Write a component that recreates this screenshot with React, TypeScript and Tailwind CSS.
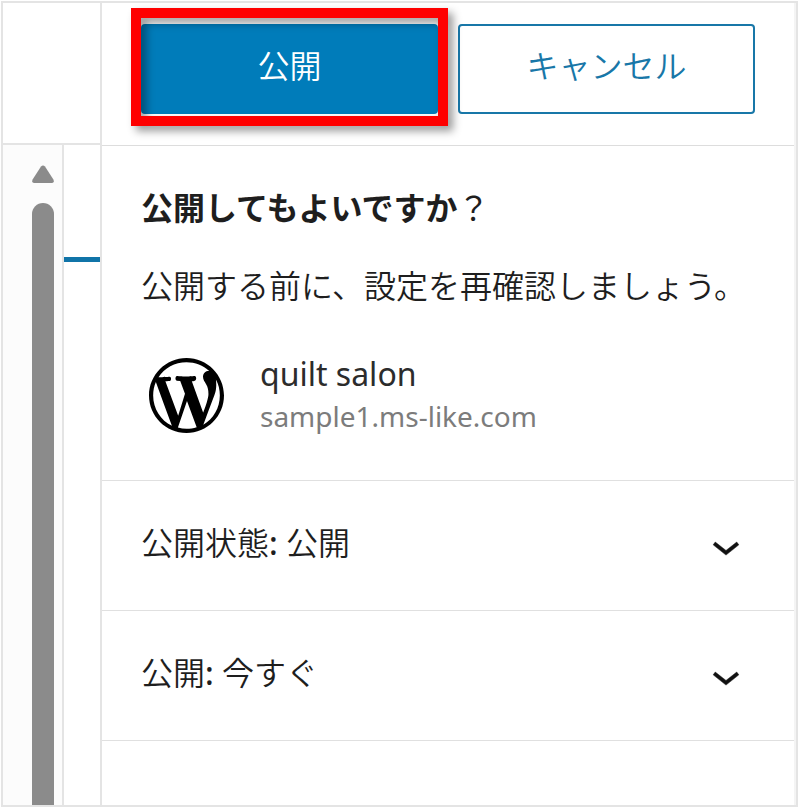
const panels = [
  { label: "公開状態", value: "公開" },
  { label: "公開", value: "今すぐ" },
]

function WordPressLogo() {
  return (
    <svg viewBox="0 0 20 20" className="h-[75px] w-[75px] shrink-0 fill-black" aria-hidden="true">
      <path d="M20 10c0-5.51-4.49-10-10-10C4.48 0 0 4.49 0 10c0 5.52 4.48 10 10 10 5.51 0 10-4.48 10-10zM7.78 15.37L4.37 6.22c.55-.02 1.17-.08 1.17-.08.5-.06.44-1.13-.06-1.11 0 0-1.45.11-2.37.11-.18 0-.37 0-.58-.01C4.12 2.69 6.87 1.11 10 1.11c2.33 0 4.45.87 6.05 2.34-.68-.11-1.65.39-1.65 1.58 0 .74.45 1.36.9 2.1.35.61.55 1.36.55 2.46 0 1.49-1.4 5-1.4 5l-3.03-8.37c.54-.02.82-.17.82-.17.5-.05.44-1.25-.06-1.22 0 0-1.44.12-2.38.12-.87 0-2.33-.12-2.33-.12-.5-.03-.56 1.2-.06 1.22l.92.08 1.26 3.41zM17.41 10c.24-.64.74-1.87.43-4.25.7 1.29 1.05 2.71 1.05 4.25 0 3.29-1.73 6.24-4.4 7.78.97-2.59 1.94-5.2 2.92-7.78zM6.1 18.09C3.12 16.65 1.11 13.53 1.11 10c0-1.3.23-2.48.72-3.59C3.25 10.3 4.67 14.2 6.1 18.09zm4.03-6.63l2.58 6.98c-.86.29-1.76.45-2.71.45-.79 0-1.57-.11-2.29-.33.81-2.38 1.62-4.74 2.42-7.1z" />
    </svg>
  )
}

function Chevron() {
  return (
    <svg
      viewBox="0 0 24 24"
      className="h-14 w-14 shrink-0 fill-[#111111] stroke-[#111111] stroke-[.2]"
      strokeLinejoin="round"
      aria-hidden="true"
    >
      <path d="M17.5 11.5L12 15.9l-5.5-4.4.9-1.2L12 13.9l4.6-3.6z" />
    </svg>
  )
}

function EditorEdge() {
  return (
    <div className="flex w-[99px] shrink-0 flex-col border-r-2 border-[#e4e4e4]">
      <div className="h-[142px] border-b-2 border-[#e4e4e4]" />
      <div className="flex grow">
        {/* Scrollbar */}
        <div className="flex w-[61px] flex-col items-end border-r-2 border-[#e4e4e4] bg-[#fcfcfc] pt-5 pr-2">
          <svg viewBox="0 0 22 18" className="h-[18px] w-[22px] fill-[#8b8b8b]" aria-hidden="true">
            <path d="M9 1.4Q11 -.4 13 1.4L21.4 14.6Q22.6 17.6 20 18H2Q-.6 17.6 .6 14.6Z" />
          </svg>
          <div className="mt-5 w-[22px] grow rounded-t-full bg-[#8b8b8b]" />
        </div>
        {/* Active tab underline */}
        <div className="grow pt-28">
          <div className="h-[5px] bg-[#1074a8]" />
        </div>
      </div>
    </div>
  )
}

export default function App() {
  return (
    <div className="min-h-screen flex bg-white pt-px pr-0.5 pb-0.5 pl-px font-['Noto_Sans','Noto_Sans_CJK_JP',sans-serif] text-[32px] text-[#1e1e1e]">
      <div className="flex grow border-2 border-[#e4e4e4]">
        <EditorEdge />

        <main className="min-w-0 grow border-r-2 border-[#f4f4f4]">
          <header className="grid h-[143px] grid-cols-2 gap-5 border-b border-[#dddddd] px-[39px] pt-[21px]">
            <div className="relative h-[90px]">
              <button className="h-full w-full rounded-[4px] bg-[#007cba] pb-1.5 font-[350] text-white">公開</button>
              {/* Highlight frame around the publish button */}
              <div className="pointer-events-none absolute -inset-x-[10px] -top-4 -bottom-3 border-10 border-[#fe0000] drop-shadow-[5px_5px_4px_rgba(0,0,0,0.4)]" />
            </div>
            <button className="h-[90px] rounded-[4px] border-2 border-[#1877a8] pb-1.5 font-[350] text-[#1877a8]">
              キャンセル
            </button>
          </header>

          <section className="h-[335px] border-b border-[#e0e0e0] px-[39px] pt-[38px]">
            <h2 className="leading-[48px] font-bold">
              公開してもよいですか<span className="font-normal">？</span>
            </h2>
            <p className="mt-[30px] leading-[48px] font-[350] whitespace-nowrap">
              公開する前に、設定を再確認しましょう。
            </p>
            <div className="mt-[42px] flex items-center gap-9 pl-2">
              <WordPressLogo />
              <div className="leading-[43px]">
                <div className="text-[#2c2c2c]">quilt salon</div>
                <div className="text-[28px] text-[#7c7c7c]">sample1.ms-like.com</div>
              </div>
            </div>
          </section>

          {panels.map((panel) => (
            <button
              key={panel.label}
              className="flex h-[130px] w-full items-center justify-between border-b border-[#e0e0e0] pr-10 pl-[39px] text-left font-[350]"
            >
              <span className="pb-1.5">
                {panel.label}
                <span className="font-medium">: </span>
                {panel.value}
              </span>
              <Chevron />
            </button>
          ))}
        </main>
      </div>
    </div>
  )
}
